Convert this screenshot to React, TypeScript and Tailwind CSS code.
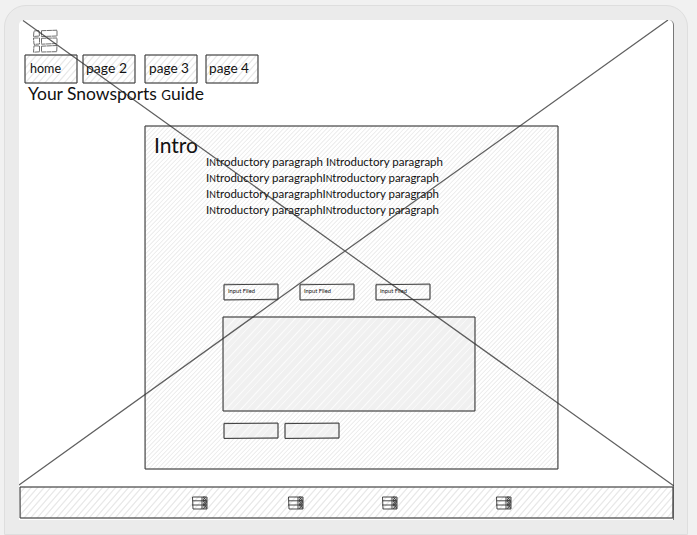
import React from "react";

type BoxProps = { className: string; fill?: string; children?: React.ReactNode; tilt?: number };

const light = "bg-[repeating-linear-gradient(134deg,#ffffff_0px,#ffffff_1.5px,#eeeeee_2.1px,#eeeeee_2.6px,#ffffff_3.1px)]";
const wide = "bg-[repeating-linear-gradient(131deg,#ffffff_0px,#ffffff_2.8px,#e9e9e9_3.6px,#e9e9e9_4.1px,#ffffff_4.9px)]";
const dense = "bg-[repeating-linear-gradient(133deg,#f1f1f1_0px,#f1f1f1_3px,#fafafa_3.6px,#f0f0f0_4.5px,#f0f0f0_9px,#fcfcfc_10px,#f1f1f1_11px)]";

/** A panel with a pen outline gone over twice. */
function Box({ className, fill = "", children, tilt = 0 }: BoxProps) {
  return (
    <div className={`relative ${fill} ${className}`}>
      <svg className="pointer-events-none absolute inset-0 h-full w-full overflow-visible" viewBox="0 0 100 100" preserveAspectRatio="none" fill="none" stroke="#444" strokeWidth="1">
        <path vectorEffect="non-scaling-stroke" d={`M0 ${tilt} L100 0 L100 ${100 - tilt} L0 100 Z`} />
        <path vectorEffect="non-scaling-stroke" strokeOpacity=".4" d={`M0 0 L100 ${tilt} L99.9 100 L0.1 ${100 - tilt / 2} Z`} />
      </svg>
      {children}
    </div>
  );
}

type WordProps = { text: string; width: number; size: number; height: number; base: number; small?: string };

/** One line of lettering, set to an exact measure; the `small` capital is drawn at lowercase height. */
function Word({ text, width, size, height, base, small }: WordProps) {
  const parts = small ? text.split(small) : [text];
  return (
    <svg className="relative block overflow-visible" width={width} height={height}>
      <text x="0" y={base} textLength={width} lengthAdjust="spacingAndGlyphs" fontSize={size} fill="#111" fontFamily="Lato, 'Liberation Sans', sans-serif">
        {parts.map((part, i) => (
          <React.Fragment key={i}>
            {i > 0 && <tspan fontSize={size * 0.76}>{small}</tspan>}
            {part}
          </React.Fragment>
        ))}
      </text>
    </svg>
  );
}

function ListIcon() {
  return (
    <svg width="26" height="23" viewBox="0 0 26 23" className="block overflow-visible" fill="none" stroke="#555" strokeWidth=".85" strokeDasharray="5 .4">
      <path d="M1 1L6 .5 6.5 6 .5 6.5ZM8.5 .7L24 .2 24 6 8.5 6.5ZM.5 8H6.5V14L1 14.4ZM8.5 8.3L24 8V13.5L8.5 14.2ZM1 15.8L6.5 16V21.8L.5 22.2ZM8.5 16.2L24 15.5 23.7 21.7 8.5 22Z" />
    </svg>
  );
}

function FooterIcon() {
  return (
    <svg width="16" height="14" viewBox="0 0 16 14" className="block overflow-visible" fill="none" stroke="#333" strokeWidth=".9">
      <path d="M.5 1H15V13H1ZM.5 4.8H15M0 9H15M10 1V13" />
      <path d="M11 1L14 4 11 5 14 8 11 9 15 12M14 1L11 4 15 6 11 8 14 10 11 13M12 0V13M14 2V13" strokeWidth=".65" />
    </svg>
  );
}

const pages: [string, number, number, string][] = [
  ["home", 31, 5, "mr-[6px]"],
  ["page 2", 41, 3, "mr-[10px]"],
  ["page 3", 40, 4, "mr-[9px]"],
  ["page 4", 40, 3, ""],
];

export default function App() {
  return (
    <main className="h-[535px] w-[697px] overflow-hidden bg-[#f1f1f1] pl-1 pt-[5px]">
      <div className="h-[530px] w-[684px] rounded-t-[22px] border border-[#dedede] bg-[#ebebeb] pl-[14px] pt-[14px]">
        <section className="relative flex h-[500px] w-[655px] flex-col rounded-t-[5px] border-r border-[#777] bg-white">
          <header className="h-[106px] pl-[6px] pt-[10px]">
            <div className="pl-[8px]"><ListIcon /></div>
            <nav className="mt-[2px] flex">
              {pages.map(([label, width, pad, gap]) => (
                <Box key={label} fill={wide} className={`h-[28px] w-[52px] ${gap}`}>
                  <div style={{ paddingLeft: pad }}><Word text={label} width={width} size={14} height={28} base={18} /></div>
                </Box>
              ))}
            </nav>
            <div className="pl-[3px]"><Word text="Your Snowsports Guide" small="G" width={176} size={17} height={24} base={17} /></div>
          </header>
          <Box fill={light} className="ml-[126px] h-[343px] w-[413px] pl-[9px] pt-[7px]">
            <Word text="Intro" width={44} size={21} height={22} base={20} />
            <div className="ml-[52px]">
              <Word text="INtroductory paragraph INtroductory paragraph" small="N" width={237} size={12} height={16} base={11} />
              {[1, 2, 3].map((n) => <Word key={n} text="INtroductory paragraphINtroductory paragraph" small="N" width={233} size={12} height={16} base={11} />)}
            </div>
            <div className="ml-[70px] mt-[65px] flex gap-[22px]">
              {[1, 2, 3].map((n) => <Box key={n} tilt={5} className="h-[16px] w-[54px] pl-1"><Word text="Input Filed" width={27} size={5.5} height={15} base={9} /></Box>)}
            </div>
            <Box fill={dense} className="ml-[68.5px] mt-[16.5px] h-[94px] w-[252px]" />
            <div className="ml-[70px] mt-[12.5px] flex gap-[6.5px]">
              <Box fill={dense} tilt={4} className="h-[15.5px] w-[54px]" />
              <Box fill={dense} tilt={4} className="h-[15.5px] w-[54px]" />
            </div>
          </Box>
          <Box fill={wide} className="ml-px mt-[18px] flex h-[31px] w-[653px] items-center pl-[172px]">
            <FooterIcon />
            <div className="ml-[80px]"><FooterIcon /></div>
            <div className="ml-[78px]"><FooterIcon /></div>
            <div className="ml-[98px]"><FooterIcon /></div>
          </Box>
          <svg className="pointer-events-none absolute inset-0" width="655" height="500" fill="none" stroke="#333" strokeOpacity=".78" strokeWidth="1.25">
            <path d="M4 0.5L326 231L655 466M649 0L326 231L0 465" />
          </svg>
        </section>
      </div>
    </main>
  );
}
